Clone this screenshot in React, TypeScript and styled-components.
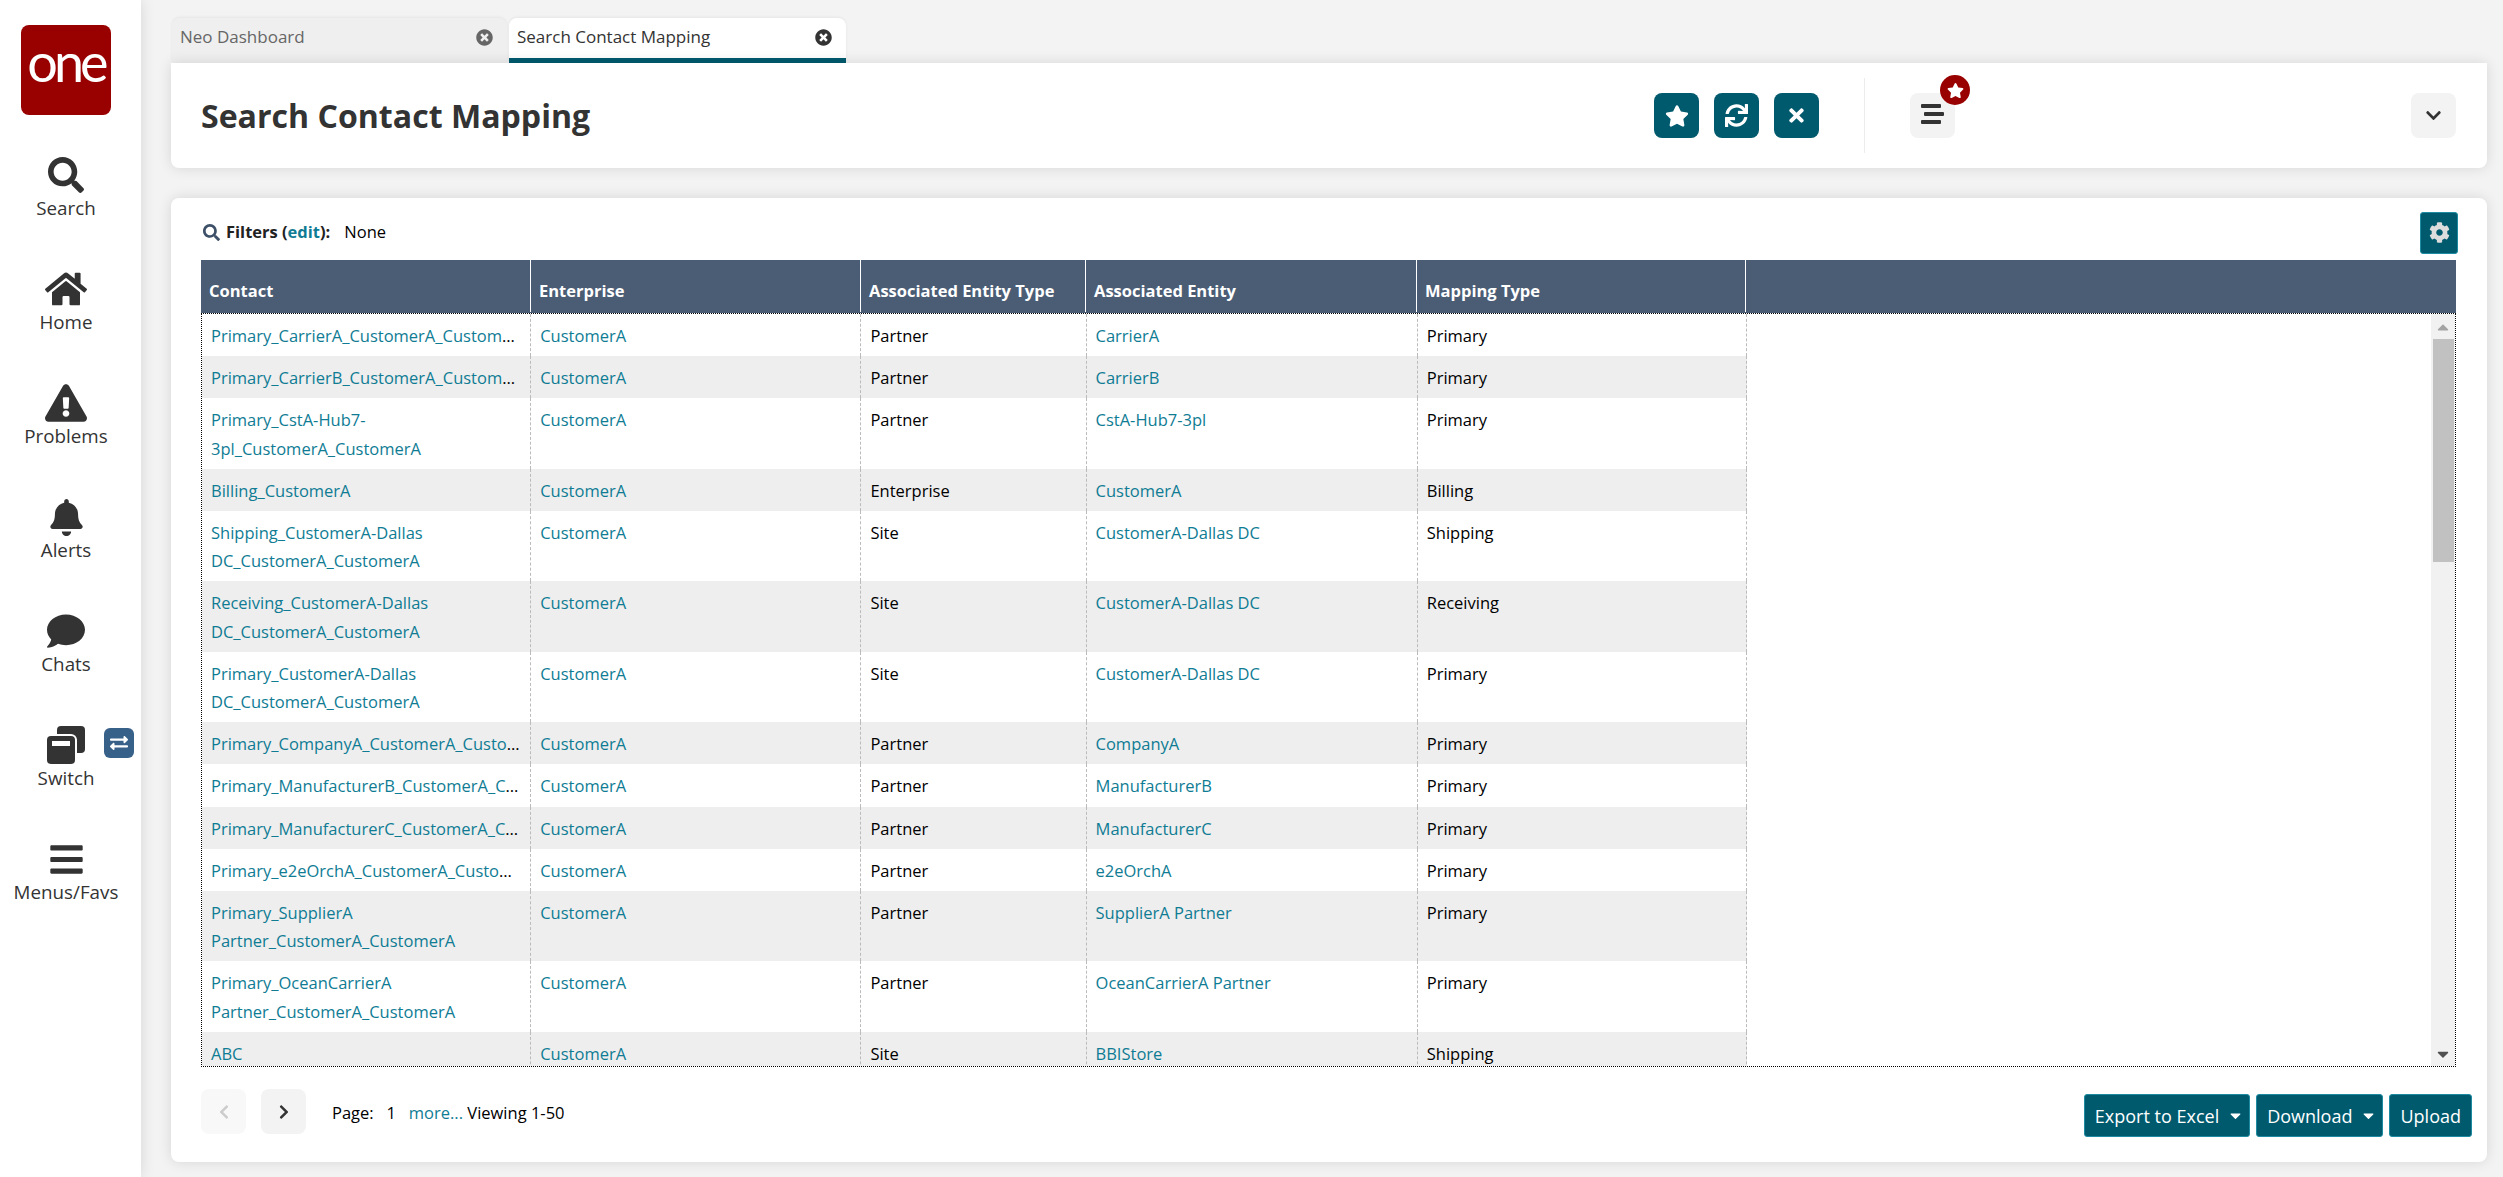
import React from 'react';
import styled, { createGlobalStyle } from 'styled-components';
import {
  FaSearch,
  FaHome,
  FaExclamationTriangle,
  FaBell,
  FaComment,
  FaBars,
  FaStar,
  FaSync,
  FaTimes,
  FaTimesCircle,
  FaCog,
  FaChevronLeft,
  FaChevronRight,
  FaChevronDown,
  FaExchangeAlt,
  FaCaretDown,
  FaCaretUp,
} from 'react-icons/fa';

const TEAL = '#005a6e';
const LINK = '#0f7c94';
const SLATE = '#4a5d75';

const GlobalStyle = createGlobalStyle`
  html, body {
    margin: 0;
    padding: 0;
    height: 100%;
    background: #f3f3f3;
    font-family: 'Open Sans', sans-serif;
    font-size: 16.5px;
    color: #000;
    overflow: hidden;
  }
  * {
    box-sizing: border-box;
  }
`;

const Page = styled.div`
  display: flex;
  width: 2503px;
  height: 1177px;
`;

// Left navigation
const Sidebar = styled.nav`
  width: 141px;
  flex: none;
  background: #fff;
  box-shadow: 0 0 14px rgba(0, 0, 0, 0.12);
  display: flex;
  flex-direction: column;
  align-items: center;
  padding: 25px 9px 0 0;
`;

const Logo = styled.div`
  width: 90px;
  height: 90px;
  border-radius: 8px;
  background: #990000;
  color: #fff;
  font-family: 'Lato', sans-serif;
  font-weight: 400;
  font-size: 54px;
  letter-spacing: -4px;
  line-height: 74px;
  text-align: center;
  margin-bottom: 40px;
`;

const NavItem = styled.div`
  position: relative;
  width: 100%;
  height: 114px;
  display: flex;
  flex-direction: column;
  align-items: center;
  color: #333;
  font-size: 18.8px;
  line-height: 26px;
`;

const NavIcon = styled.div`
  height: 40px;
  display: flex;
  align-items: center;
  justify-content: center;
`;

const SwitchBadge = styled.div`
  position: absolute;
  left: 104px;
  top: 3px;
  width: 30px;
  height: 30px;
  border-radius: 6px;
  background: #38618a;
  color: #fff;
  display: flex;
  align-items: center;
  justify-content: center;
`;

const Main = styled.main`
  flex: 1;
  display: flex;
  flex-direction: column;
  padding: 18px 16px 15px 30px;
  min-width: 0;
`;

// Tabs
const TabStrip = styled.div`
  display: flex;
  gap: 2px;
  height: 45px;
  padding-left: 1px;
`;

const Tab = styled.div<{ $active?: boolean }>`
  width: ${(p) => (p.$active ? '337px' : '335px')};
  height: 45px;
  border-radius: 8px 8px 0 0;
  background: ${(p) => (p.$active ? '#fff' : '#efefef')};
  color: ${(p) => (p.$active ? '#333' : '#666')};
  border-bottom: ${(p) => (p.$active ? `5px solid ${TEAL}` : 'none')};
  box-shadow: 0 -1px 3px rgba(0, 0, 0, 0.06);
  display: flex;
  align-items: flex-start;
  justify-content: space-between;
  padding: 8px 14px 0 8px;
  font-size: 17px;
  line-height: 22px;
`;

const TabClose = styled.span`
  display: flex;
  align-items: center;
  height: 22px;
  font-size: 17px;
`;

const Card = styled.section`
  background: #fff;
  border-radius: 0 0 8px 8px;
  box-shadow: 0 0 14px rgba(0, 0, 0, 0.12);
`;

// Page title bar
const TitleCard = styled(Card)`
  position: relative;
  height: 105px;
  display: flex;
  align-items: center;
  padding: 0 31px 0 30px;
  margin-bottom: 30px;
`;

const Title = styled.h1`
  flex: 1;
  margin: 0;
  font-size: 32.1px;
  font-weight: 700;
  color: #333;
`;

const ActionGroup = styled.div`
  display: flex;
  gap: 15px;
`;

const IconButton = styled.button`
  width: 45px;
  height: 45px;
  border: 0;
  padding: 0;
  border-radius: 8px;
  background: ${TEAL};
  color: #fff;
  display: flex;
  align-items: center;
  justify-content: center;
`;

const GreyButton = styled(IconButton)<{ $dim?: boolean }>`
  background: ${(p) => (p.$dim ? '#f8f8f8' : '#f3f3f3')};
  color: ${(p) => (p.$dim ? '#ccc' : '#333')};
`;

const Divider = styled.div`
  width: 1px;
  height: 75px;
  background: #ececec;
  margin: 0 45px;
`;

const MenuWrap = styled.div`
  position: relative;
  flex: 0 0 501px;
`;

const Badge = styled.div`
  position: absolute;
  left: 30px;
  top: -18px;
  width: 30px;
  height: 30px;
  border-radius: 50%;
  background: #990000;
  color: #fff;
  display: flex;
  align-items: center;
  justify-content: center;
`;

// Results card
const ResultsCard = styled(Card)`
  flex: 1;
  border-radius: 8px;
  padding: 0 15px 0 30px;
  display: flex;
  flex-direction: column;
`;

const FilterRow = styled.div`
  width: 2257px;
  height: 62px;
  display: flex;
  align-items: center;
  justify-content: space-between;
  padding-top: 1px;
`;

const FilterText = styled.div`
  display: flex;
  align-items: center;
  line-height: 22px;
  margin: 5px 0 0 2px;
`;

const FilterLabel = styled.b`
  font-weight: 700;
  margin-left: 6px;
  color: #222;
`;

const Link = styled.a`
  color: ${LINK};
  text-decoration: none;
`;

const FilterValue = styled.span`
  margin-left: 14px;
`;

const GearButton = styled.button`
  width: 38px;
  height: 42px;
  margin-top: 6px;
  padding: 0;
  border: 1px solid #1e8ba3;
  border-radius: 3px;
  background: ${TEAL};
  color: #ddd;
  display: flex;
  align-items: center;
  justify-content: center;
`;

const TableWrap = styled.div`
  width: 2255px;
  height: 807px;
  display: flex;
  flex-direction: column;
`;

const GridTable = styled.table`
  border-collapse: separate;
  border-spacing: 0;
  table-layout: fixed;
  width: 1545px;
`;

const HeaderBand = styled.div`
  height: 53px;
  flex: none;
  background: ${SLATE};
`;

const HeadCell = styled.th`
  height: 52px;
  padding: 9px 8px 0;
  border-right: 1px solid #fff;
  text-align: left;
  color: #fff;
  font-size: 16.5px;
  font-weight: 700;
`;

const BodyFrame = styled.div`
  position: relative;
  flex: 1;
  min-height: 0;
  overflow: hidden;
  border: 1px dotted #000;
`;

const Row = styled.tr<{ $alt?: boolean }>`
  background: ${(p) => (p.$alt ? '#eeeeee' : '#fff')};
`;

const Cell = styled.td<{ $clip?: boolean }>`
  padding: 8px 9px 6px;
  border-right: 1px dashed #bbb;
  vertical-align: top;
  line-height: 28.2px;
  font-size: 16.5px;
  color: #000;
  ${(p) =>
    p.$clip
      ? `white-space: nowrap; overflow: hidden; text-overflow: ellipsis; padding-right: 10px;`
      : ''}
`;

// Overlaid scrollbar on the right of the grid body
const ScrollTrack = styled.div`
  position: absolute;
  top: 0;
  right: 0;
  bottom: 0;
  width: 24px;
  background: #f1f1f1;
  display: flex;
  flex-direction: column;
  align-items: center;
`;

const ScrollArrow = styled.div<{ $dark?: boolean }>`
  height: 25px;
  flex: none;
  display: flex;
  align-items: center;
  justify-content: center;
  color: ${(p) => (p.$dark ? '#505050' : '#a3a3a3')};
`;

const ScrollThumb = styled.div`
  width: 21px;
  height: 223px;
  background: #c1c1c1;
`;

const ScrollRest = styled.div`
  flex: 1;
`;

// Pager and bottom buttons
const Footer = styled.div`
  flex: 1;
  display: flex;
  align-items: flex-start;
  justify-content: space-between;
`;

const Pager = styled.div`
  display: flex;
  align-items: center;
  gap: 15px;
  padding-top: 22px;
`;

const PagerText = styled.div`
  display: flex;
  margin: 2px 0 0 11px;
  color: #000;
  white-space: pre;
`;

const FooterButtons = styled.div`
  display: flex;
  gap: 6px;
  padding-top: 27px;
`;

const ActionButton = styled.button`
  height: 43px;
  padding: 0 10px;
  border: 1px solid #1e8ba3;
  border-radius: 3px;
  background: ${TEAL};
  color: #fff;
  font-family: 'Open Sans', sans-serif;
  font-size: 18px;
  display: flex;
  align-items: center;
  gap: 8px;
`;

const ButtonCaret = styled(FaCaretDown)`
  margin-right: -5px;
  font-size: 17px;
`;

const MenuGlyph = () => (
  <svg width="24" height="23" viewBox="0 0 24 23" fill="#333">
    <rect x="0" y="0" width="20" height="4" rx="1" />
    <rect x="3" y="8" width="20" height="4" rx="1" />
    <rect x="0" y="16" width="20" height="4" rx="1" />
  </svg>
);

const SwitchGlyph = () => (
  <svg width="38" height="38" viewBox="0 0 38 38">
    <rect x="10" y="0" width="28" height="27" rx="4" fill="#333" />
    <rect x="-2" y="8" width="32" height="32" rx="6" fill="#fff" />
    <rect x="0" y="10" width="28" height="28" rx="4" fill="#333" />
    <rect x="5" y="15" width="18" height="5" fill="#fff" />
  </svg>
);

interface MappingRow {
  contact: string;
  clip?: boolean;
  entity: string;
  type: string;
  mapping: string;
}

const rows: MappingRow[] = [
  { contact: 'Primary_CarrierA_CustomerA_CustomerA', clip: true, entity: 'Partner', type: 'CarrierA', mapping: 'Primary' },
  { contact: 'Primary_CarrierB_CustomerA_CustomerA', clip: true, entity: 'Partner', type: 'CarrierB', mapping: 'Primary' },
  { contact: 'Primary_CstA-Hub7-3pl_CustomerA_CustomerA', entity: 'Partner', type: 'CstA-Hub7-3pl', mapping: 'Primary' },
  { contact: 'Billing_CustomerA', entity: 'Enterprise', type: 'CustomerA', mapping: 'Billing' },
  { contact: 'Shipping_CustomerA-Dallas DC_CustomerA_CustomerA', entity: 'Site', type: 'CustomerA-Dallas DC', mapping: 'Shipping' },
  { contact: 'Receiving_CustomerA-Dallas DC_CustomerA_CustomerA', entity: 'Site', type: 'CustomerA-Dallas DC', mapping: 'Receiving' },
  { contact: 'Primary_CustomerA-Dallas DC_CustomerA_CustomerA', entity: 'Site', type: 'CustomerA-Dallas DC', mapping: 'Primary' },
  { contact: 'Primary_CompanyA_CustomerA_CustomerA', clip: true, entity: 'Partner', type: 'CompanyA', mapping: 'Primary' },
  { contact: 'Primary_ManufacturerB_CustomerA_CustomerA', clip: true, entity: 'Partner', type: 'ManufacturerB', mapping: 'Primary' },
  { contact: 'Primary_ManufacturerC_CustomerA_CustomerA', clip: true, entity: 'Partner', type: 'ManufacturerC', mapping: 'Primary' },
  { contact: 'Primary_e2eOrchA_CustomerA_CustomerA', clip: true, entity: 'Partner', type: 'e2eOrchA', mapping: 'Primary' },
  { contact: 'Primary_SupplierA Partner_CustomerA_CustomerA', entity: 'Partner', type: 'SupplierA Partner', mapping: 'Primary' },
  { contact: 'Primary_OceanCarrierA Partner_CustomerA_CustomerA', entity: 'Partner', type: 'OceanCarrierA Partner', mapping: 'Primary' },
  { contact: 'ABC', entity: 'Site', type: 'BBIStore', mapping: 'Shipping' },
];

const headers = ['Contact', 'Enterprise', 'Associated Entity Type', 'Associated Entity', 'Mapping Type'];

// the body sits 1px further right than the header because of its dotted frame
const Columns = ({ first }: { first: number }) => (
  <colgroup>
    <col style={{ width: first }} />
    <col style={{ width: 330 }} />
    <col style={{ width: 225 }} />
    <col style={{ width: 331 }} />
    <col style={{ width: 329 }} />
  </colgroup>
);

const navItems = [
  { label: 'Search', icon: <FaSearch size={36} /> },
  { label: 'Home', icon: <FaHome size={42} /> },
  { label: 'Problems', icon: <FaExclamationTriangle size={42} /> },
  { label: 'Alerts', icon: <FaBell size={37} /> },
  { label: 'Chats', icon: <FaComment size={38} /> },
  { label: 'Switch', icon: <SwitchGlyph />, badge: true },
  { label: 'Menus/Favs', icon: <FaBars size={37} /> },
];

export default function App() {
  return (
    <Page>
      <GlobalStyle />
      <Sidebar>
        <Logo>one</Logo>
        {navItems.map((item) => (
          <NavItem key={item.label}>
            <NavIcon>{item.icon}</NavIcon>
            {item.label}
            {item.badge && (
              <SwitchBadge>
                <FaExchangeAlt size={18} />
              </SwitchBadge>
            )}
          </NavItem>
        ))}
      </Sidebar>
      <Main>
        <TabStrip>
          <Tab>
            Neo Dashboard
            <TabClose>
              <FaTimesCircle />
            </TabClose>
          </Tab>
          <Tab $active>
            Search Contact Mapping
            <TabClose>
              <FaTimesCircle />
            </TabClose>
          </Tab>
        </TabStrip>
        <TitleCard>
          <Title>Search Contact Mapping</Title>
          <ActionGroup>
            <IconButton>
              <FaStar size={24} />
            </IconButton>
            <IconButton>
              <FaSync size={23} />
            </IconButton>
            <IconButton>
              <FaTimes size={21} />
            </IconButton>
          </ActionGroup>
          <Divider />
          <MenuWrap>
            <GreyButton>
              <MenuGlyph />
            </GreyButton>
            <Badge>
              <FaStar size={17} />
            </Badge>
          </MenuWrap>
          <GreyButton>
            <FaChevronDown size={17} />
          </GreyButton>
        </TitleCard>
        <ResultsCard>
          <FilterRow>
            <FilterText>
              <FaSearch size={17} color="#3d5068" />
              <FilterLabel>
                Filters (<Link>edit</Link>):
              </FilterLabel>
              <FilterValue>None</FilterValue>
            </FilterText>
            <GearButton>
              <FaCog size={21} />
            </GearButton>
          </FilterRow>
          <TableWrap>
            <HeaderBand>
              <GridTable>
                <Columns first={330} />
                <thead>
                  <tr>
                    {headers.map((h) => (
                      <HeadCell key={h}>{h}</HeadCell>
                    ))}
                  </tr>
                </thead>
              </GridTable>
            </HeaderBand>
            <BodyFrame>
              <GridTable>
                <Columns first={329} />
                <tbody>
                  {rows.map((r, i) => (
                    <Row key={r.contact} $alt={i % 2 === 1}>
                      <Cell $clip={r.clip}>
                        <Link>{r.contact}</Link>
                      </Cell>
                      <Cell>
                        <Link>CustomerA</Link>
                      </Cell>
                      <Cell>{r.entity}</Cell>
                      <Cell>
                        <Link>{r.type}</Link>
                      </Cell>
                      <Cell>{r.mapping}</Cell>
                    </Row>
                  ))}
                </tbody>
              </GridTable>
              <ScrollTrack>
                <ScrollArrow>
                  <FaCaretUp size={18} />
                </ScrollArrow>
                <ScrollThumb />
                <ScrollRest />
                <ScrollArrow $dark>
                  <FaCaretDown size={18} />
                </ScrollArrow>
              </ScrollTrack>
            </BodyFrame>
          </TableWrap>
          <Footer>
            <Pager>
              <GreyButton $dim>
                <FaChevronLeft size={16} />
              </GreyButton>
              <GreyButton>
                <FaChevronRight size={16} />
              </GreyButton>
              <PagerText>
                {'Page:   1   '}
                <Link>more...</Link>
                {' Viewing 1-50'}
              </PagerText>
            </Pager>
            <FooterButtons>
              <ActionButton>
                Export to Excel
                <ButtonCaret />
              </ActionButton>
              <ActionButton>
                Download
                <ButtonCaret />
              </ActionButton>
              <ActionButton>Upload</ActionButton>
            </FooterButtons>
          </Footer>
        </ResultsCard>
      </Main>
    </Page>
  );
}
